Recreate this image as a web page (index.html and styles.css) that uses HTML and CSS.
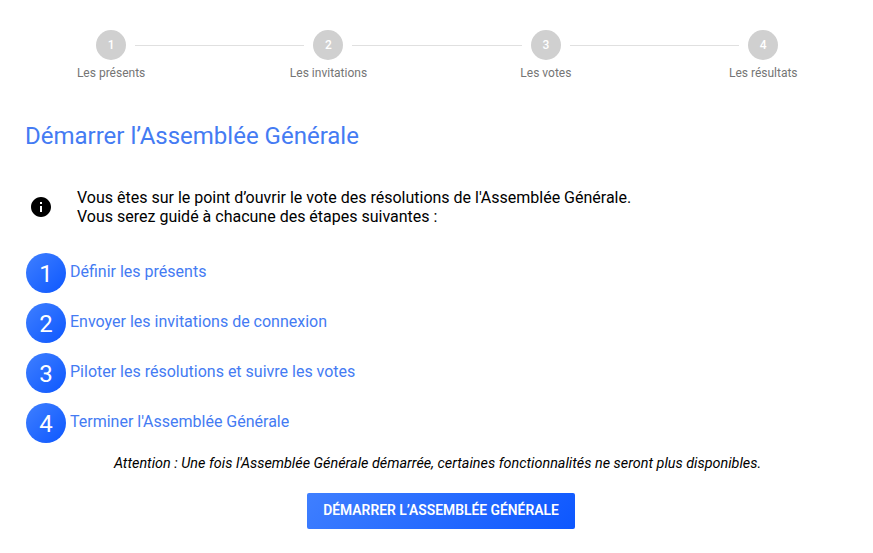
FILE: index.html
```html
<!DOCTYPE html>
<html lang="fr">
<head>
<meta charset="utf-8">
<title>Assemblée Générale</title>
<link rel="stylesheet" href="styles.css">
</head>
<body>
<ol class="stepper">
<li class="stage"><span class="dot">1</span><span class="label">Les présents</span></li>
<li class="stage"><span class="dot">2</span><span class="label">Les invitations</span></li>
<li class="stage"><span class="dot">3</span><span class="label">Les votes</span></li>
<li class="stage"><span class="dot">4</span><span class="label">Les résultats</span></li>
</ol>
<main>
<h1>Démarrer l’Assemblée Générale</h1>
<div class="info">
<svg class="info-icon" viewBox="0 0 24 24"><path d="M12 2C6.48 2 2 6.48 2 12s4.480 10 10 10 10-4.480 10-10S17.520 2 12 2zm1 15h-2v-6h2v6zm0-8h-2V7h2v2z"/></svg>
<p>Vous êtes sur le point d’ouvrir le vote des résolutions de l'Assemblée Générale.<br>Vous serez guidé à chacune des étapes suivantes :</p>
</div>
<ol class="steps">
<li><span class="badge">1</span><span>Définir les présents</span></li>
<li><span class="badge">2</span><span>Envoyer les invitations de connexion</span></li>
<li><span class="badge">3</span><span>Piloter les résolutions et suivre les votes</span></li>
<li><span class="badge">4</span><span>Terminer l'Assemblée Générale</span></li>
</ol>
<p class="warning">Attention : Une fois l'Assemblée Générale démarrée, certaines fonctionnalités ne seront plus disponibles.</p>
<button class="start">Démarrer l’Assemblée Générale</button>
</main>
</body>
</html>
```
FILE: styles.css
```css
* { box-sizing: border-box; }
body { margin: 0; font-family: Roboto, sans-serif; font-size: 16px; color: #000; background: #fff; }
ol, p, h1 { margin: 0; padding: 0; list-style: none; }
.stepper { display: grid; grid-template-columns: repeat(4, 217.4px); padding: 30px 0 0 2.4px; height: 120px; }
.stage { display: grid; grid-template-columns: 1fr 30px 1fr; column-gap: 9px; align-content: start; align-items: center; }
.stage::before, .stage::after { content: ""; height: 1px; background: #e0e0e0; grid-row: 1; }
.stage::before { grid-column: 1; }
.stage::after { grid-column: 3; }
.stage:first-child::before, .stage:last-child::after { visibility: hidden; }
.dot { grid-column: 2; grid-row: 1; height: 30px; border-radius: 50%; background: #d0d0d0; color: #fff; font-size: 12px; font-weight: 500; line-height: 30px; text-align: center; }
.label { grid-column: 1 / 4; grid-row: 2; margin-top: 6px; text-align: center; font-size: 12px; line-height: 14px; color: #757575; }
main { display: flex; flex-direction: column; padding: 0 25px; }
h1 { font-size: 24px; font-weight: 400; line-height: 32px; color: #447bf3; }
.info { display: flex; align-items: center; margin-top: 36px; padding-left: 4px; line-height: 19px; }
.info-icon { width: 24px; height: 24px; margin-right: 24px; }
.steps { display: grid; gap: 10px; margin: 27px 0 0 1px; color: #447bf3; }
.steps li { display: flex; gap: 4px; height: 40px; line-height: 37px; }
.badge { width: 40px; height: 40px; border-radius: 50%; background: linear-gradient(135deg, #3f7fff, #0d57ff); color: #fff; font-size: 24px; line-height: 42px; text-align: center; }
.warning { margin-top: 13px; padding-left: 2px; text-align: center; font-size: 14.4px; font-style: italic; line-height: 16px; }
.start { width: 268px; height: 36px; margin: 21px 0 0 282px; padding: 0 0 1px; border: 0; border-radius: 2px; background: linear-gradient(135deg, #3f7fff, #0d57ff); color: #fff; font: 600 13.86px/35px Roboto, sans-serif; text-transform: uppercase; }
```
